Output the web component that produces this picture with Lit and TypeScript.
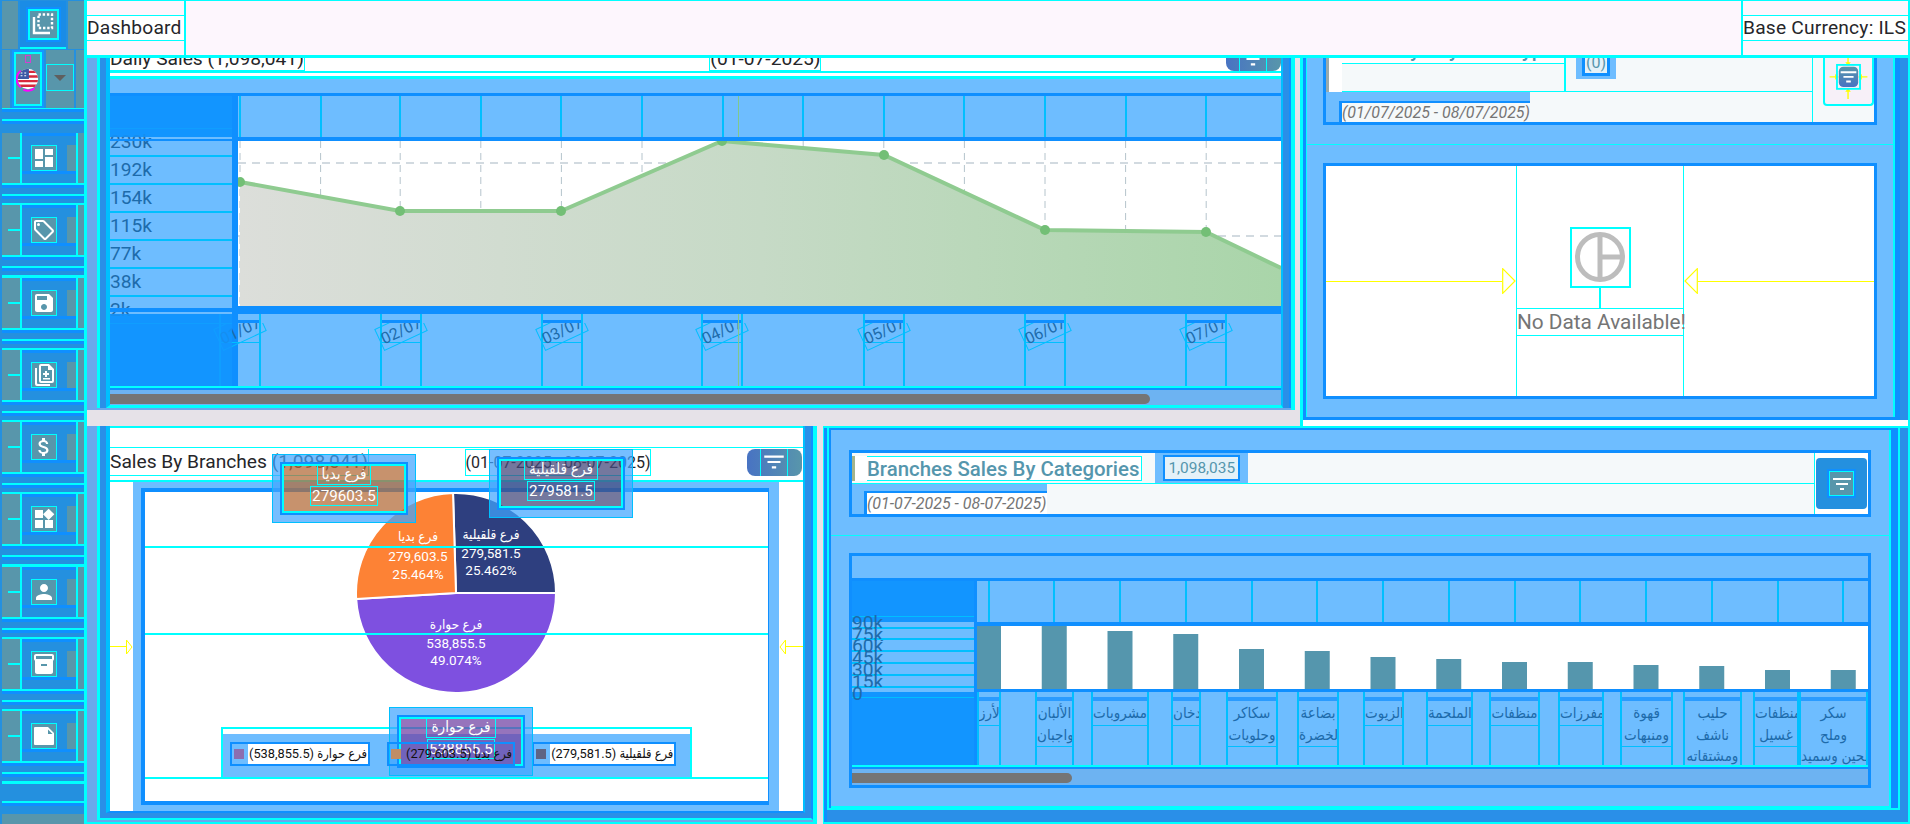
import { LitElement, css, html, svg } from "lit";
import { customElement } from "lit/decorators.js";

const FILTER = "M10 18h4v-2h-4v2zM3 6v2h18V6H3zm3 7h12v-2H6v2z";

const NAV_ICONS = [
  svg`<path d="M3 13h8V3H3v10zm0 8h8v-6H3v6zm10 0h8V11h-8v10zm0-18v6h8V3h-8z" />`,
  svg`<path d="M21.41 11.58l-9-9C12.05 2.22 11.55 2 11 2H4c-1.1 0-2 .9-2 2v7c0 .55.22 1.05.59 1.42l9 9c.36.36.86.58 1.41.58s1.05-.22 1.41-.59l7-7c.37-.36.59-.86.59-1.41s-.23-1.06-.59-1.42zM13 20.01L4 11V4h7v-.01l9 9-7 7.02z" /><circle cx="6.5" cy="6.5" r="1.5" />`,
  svg`<path d="M17 3H5c-1.11 0-2 .9-2 2v14c0 1.1.89 2 2 2h14c1.1 0 2-.9 2-2V7l-4-4zm-5 16c-1.66 0-3-1.34-3-3s1.34-3 3-3 3 1.34 3 3-1.34 3-3 3zm3-10H5V5h10v4z" />`,
  svg`<path fill-rule="evenodd" d="M9 1h8l5 5v12a2 2 0 0 1-2 2H9a2 2 0 0 1-2-2V3a2 2 0 0 1 2-2zm0 2v15h11V7h-4V3zM13 8h2v2h2v2h-2v2h-2v-2h-2v-2h2zM11 15h7v1.6h-7zM3 5h2v15a1 1 0 0 0 1 1h12v2H5a2 2 0 0 1-2-2z" />`,
  svg`<path d="M11.8 10.9c-2.27-.59-3-1.2-3-2.15 0-1.09 1.01-1.85 2.7-1.85 1.78 0 2.44.85 2.5 2.1h2.21c-.07-1.72-1.12-3.3-3.21-3.81V3h-3v2.16c-1.94.42-3.5 1.68-3.5 3.61 0 2.31 1.91 3.46 4.7 4.13 2.5.6 3 1.48 3 2.41 0 .69-.49 1.79-2.7 1.79-2.06 0-2.87-.92-2.98-2.1h-2.2c.12 2.19 1.76 3.42 3.68 3.83V21h3v-2.15c1.95-.37 3.5-1.5 3.5-3.55 0-2.84-2.43-3.81-4.7-4.4z" />`,
  svg`<path d="M13 13v8h8v-8h-8zM3 21h8v-8H3v8zM3 3v8h8V3H3zm13.66-1.31L11 7.34 16.66 13l5.66-5.66-5.66-5.65z" />`,
  svg`<path d="M12 12c2.21 0 4-1.79 4-4s-1.79-4-4-4-4 1.79-4 4 1.79 4 4 4zm0 2c-2.67 0-8 1.34-8 4v2h16v-2c0-2.66-5.33-4-8-4z" />`,
  svg`<path d="M20 2H4c-1 0-2 .9-2 2v3.01c0 .72.43 1.34 1 1.69V20c0 1.1 1.1 2 2 2h14c.9 0 2-.9 2-2V8.7c.57-.35 1-.97 1-1.69V4c0-1.1-1-2-2-2zm-5 12H9v-2h6v2zm5-7H4V4l16-.02V7z" />`,
  svg`<path fill-rule="evenodd" d="M3 3h13l6 6v11a1 1 0 0 1-1 1H3a1 1 0 0 1-1-1V4a1 1 0 0 1 1-1zm13 2.500V10h4.500z" />`,
];

// daily sales chart, numbers are page pixels (viewBox matches)
const DAILY_TICKS = [240, 320.6, 400.2, 480.8, 561.4, 642, 722.6, 803.2, 883.8, 964.4, 1045, 1125.6, 1206.2];
const DAILY_LABELS: [number, string][] = [
  [240, "01/07"], [400.5, "02/07"], [561.5, "03/07"], [722, "04/07"],
  [884, "05/07"], [1045, "06/07"], [1206, "07/07"],
];
const DAILY_POINTS = [
  [240, 182], [400, 211], [561, 211], [722, 141], [884, 155], [1045, 230], [1206, 232], [1281, 268],
];

const CAT_TICK = (i: number) => 988.5 + 65.75 * i;
const CAT_TOPS = [626, 626, 631, 634, 649, 651, 657, 659, 662, 662, 665, 666, 670, 670];
const CAT_LABELS: [number, number, string[]][] = [
  [977, 24, ["الأرز"]],
  [1035, 39, ["الألبان", "واجبان"]],
  [1091, 58, ["مشروبات"]],
  [1171, 30, ["دخان"]],
  [1226, 52, ["سكاكر", "وحلويات"]],
  [1297, 42, ["بضاعة", "الخضرة"]],
  [1363, 41, ["الزيوت"]],
  [1426, 47, ["الملحمة"]],
  [1489, 51, ["منظفات"]],
  [1558, 46, ["مفرزات"]],
  [1620, 53, ["قهوة", "ومنبهات"]],
  [1683, 59, ["حليب", "ناشف", "ومشتقاته"]],
  [1753, 46, ["منظفات", "غسيل"]],
  [1799, 69, ["سكر", "وملح", "طحين وسميد"]],
];

const PIE = [
  { pct: 25.462, color: "#2e3f7f" },
  { pct: 49.074, color: "#7e50e0" },
  { pct: 25.464, color: "#fd8235" },
];

function slices() {
  let start = -1.7;
  return PIE.map((s) => {
    const end = start + (s.pct * 360) / 100;
    const pt = (deg: number) => {
      const r = ((deg - 90) * Math.PI) / 180;
      return `${(105 + 100 * Math.cos(r)).toFixed(2)} ${(105 + 100 * Math.sin(r)).toFixed(2)}`;
    };
    const d = `M105 105L${pt(start)}A100 100 0 ${end - start > 180 ? 1 : 0} 1 ${pt(end)}Z`;
    start = end;
    return svg`<path d=${d} fill=${s.color} stroke="#fff" stroke-width="2" />`;
  });
}

@customElement("app-root")
export class AppRoot extends LitElement {
  static styles = css`
    :host {
      display: block;
      width: 1910px;
      height: 824px;
      overflow: hidden;
      font-family: Roboto, "DejaVu Sans Condensed", "DejaVu Sans", sans-serif;
      font-size: 19.2px;
      color: #26262a;
    }
    * {
      box-sizing: border-box;
    }
    svg {
      display: block;
    }
    .page {
      display: flex;
      width: 1910px;
      height: 824px;
    }

    /* sidebar */
    .sidebar {
      flex: none;
      display: flex;
      flex-direction: column;
      width: 87px;
      height: 824px;
      padding-left: 2px;
      border-right: 3px solid #00ffff;
      background: #2490df;
    }
    .sb-top {
      display: flex;
      gap: 2px;
      height: 48px;
      margin: 1px 0 1px;
    }
    .teal {
      background: #5896ab;
    }
    .sb-logo {
      display: flex;
      flex: none;
      align-items: center;
      justify-content: center;
      width: 46px;
      background: #1a8ce6;
      border: solid #00ffff;
      border-width: 0 0 2px;
    }
    .sb-logo-in {
      display: flex;
      align-items: center;
      justify-content: center;
      width: 35px;
      height: 35px;
      border: 2px solid #0f8fff;
      outline: 2px solid #00ffff;
      outline-offset: -4px;
      background: #5896ab;
    }
    .sb-flag {
      display: flex;
      gap: 2px;
      height: 58px;
    }
    .flag-cell {
      position: relative;
      flex: none;
      width: 32px;
      border: 4px solid #1397ff;
      background: #5896ab;
      outline: 2px solid #00ffff;
      outline-offset: -4px;
      display: flex;
      align-items: center;
      justify-content: center;
    }
    .flag-mark {
      position: absolute;
      top: 1px;
      left: 9px;
      width: 6px;
      height: 8px;
      border: 1px solid #d23fd2;
    }
    .caret-col {
      flex: none;
      display: flex;
      flex-direction: column;
      width: 28px;
    }
    .caret-box {
      display: flex;
      flex: none;
      align-items: center;
      justify-content: center;
      height: 27px;
      margin-top: 14px;
      border: 1px solid #00ffff;
      background: #5896ab;
    }
    .caret {
      width: 0;
      height: 0;
      border: solid transparent;
      border-width: 6px 6px 0;
      border-top-color: #5f5f5f;
    }
    .sb-band {
      flex: none;
      height: 25px;
      background: linear-gradient(#0f8fff 0 3px, #2490df 3px 10px, #00ffff 10px 12px, #0f8fff 12px 15px, #2490df 15px);
      border-top: 1px solid #00ffff;
    }
    .nav-item {
      display: flex;
      flex: none;
      height: 50px;
    }
    .nav-left {
      position: relative;
      flex: none;
      width: 18px;
    }
    .nav-left::after {
      content: "";
      position: absolute;
      top: 24px;
      right: 0;
      width: 12px;
      height: 2px;
      background: #00ffff;
    }
    .nav-mid {
      flex: none;
      width: 58px;
      border: solid #00ffff;
      border-width: 0 2px;
    }
    .nav-stripe {
      height: 12px;
      background: linear-gradient(#0f8fff 0 3px, #2490df 3px);
    }
    .nav-row {
      display: flex;
      height: 26px;
      padding-left: 9px;
      background: #2490df;
    }
    .nav-icon {
      display: flex;
      flex: none;
      align-items: center;
      justify-content: center;
      width: 26px;
      border: 1px solid #00ffff;
      background: #5896ab;
    }
    .nav-icon svg {
      width: 24px;
      height: 24px;
      fill: #fff;
    }
    .nav-fill {
      flex: 1;
      margin-left: 10px;
      background: #5896ab;
    }
    .nav-gap {
      flex: none;
      height: 22.3px;
      background: linear-gradient(#00ffff 0 2px, #0f8fff 2px 5px, #2490df 5px 11px, #00ffff 11px 13px, #0f8fff 13px 16px, #2490df 16px 20px, #00ffff 20px);
    }
    .nav-right {
      flex: 1;
    }
    .sb-foot {
      flex: 1;
      background: linear-gradient(#2490df 0 17px, #00ffff 17px 19px, #0f8fff 19px 22px, #2490df 22px 30px, #5896ab 30px);
    }

    /* main area */
    .main {
      position: relative;
      flex: 1;
      height: 824px;
      background: #e6e2e8;
    }
    .top-bar {
      position: absolute;
      top: 0;
      left: 0;
      right: 0;
      z-index: 6;
      display: flex;
      justify-content: space-between;
      height: 58px;
      border: solid #00ffff;
      border-width: 1px 2px 3px 0;
      background: #fdf6fd;
    }
    .top-cell {
      display: flex;
      align-items: center;
      height: 54px;
    }
    .top-cell.left {
      border-right: 2px solid #00ffff;
    }
    .top-cell.right {
      border-left: 2px solid #00ffff;
    }
    .top-cell span {
      padding-right: 2px;
      height: 26px;
      line-height: 24px;
      letter-spacing: 0.2px;
      border: solid #00ffff;
      border-width: 1px 0;
      background: #fff;
    }
    .row {
      display: flex;
    }
    .row.one {
      height: 426px;
      gap: 5px;
    }
    .row.two {
      height: 398px;
      gap: 6px;
    }

    /* nested strips around the left panels */
    .ring {
      flex: none;
      padding-left: 10px;
      border-right: 4px solid #00ffff;
      background: #6aa8ec;
    }
    .ring-a {
      height: 100%;
      padding: 0 6px;
      border: solid #00ffff;
      border-width: 0 0 0 3px;
      border-right: 2px solid #0f8fff;
      background: #2a8fe8;
    }
    .ring-b {
      display: flex;
      flex-direction: column;
      height: 100%;
      border: solid #00bfff;
      border-width: 0 2px 0 4px;
    }
    .tl {
      width: 1208px;
      height: 410px;
      padding-bottom: 2px;
    }
    .tl .ring-b {
      border-bottom: 3px solid #00ffff;
    }
    .bl {
      position: relative;
      width: 730px;
      height: 398px;
      padding-bottom: 2px;
      border-bottom: 2px solid #00ffff;
    }
    .bl .ring-a {
      padding-bottom: 5px;
      border-bottom: 2px solid #00ffff;
    }
    .bl .ring-b {
      border-bottom: 2px solid #0f8fff;
    }

    .title-row {
      display: flex;
      flex: none;
      align-items: center;
      justify-content: space-between;
      background: #fff;
    }
    .tl .title-row {
      height: 71px;
      padding-top: 47px;
    }
    .title-row .txt {
      height: 24px;
      line-height: 23px;
      border: solid #00ffff;
      border-width: 0 1px 1px 0;
      white-space: nowrap;
    }
    .tl .title-row .date {
      border-left-width: 1px;
    }
    .filter-tab {
      display: flex;
      flex: none;
      justify-content: center;
      width: 55px;
      height: 24px;
      border-radius: 0 0 8px 8px;
      background: linear-gradient(90deg, #4873c3, #5896ab);
    }
    .filter-tab span {
      display: flex;
      align-items: center;
      justify-content: center;
      width: 28px;
      border: solid #00ffff;
      border-width: 0 1px;
    }
    .filter-tab svg {
      width: 26px;
      height: 26px;
      fill: #fff;
    }
    .rule-set {
      flex: none;
      height: 8px;
      background: linear-gradient(#00ffff 0 2px, #fff 2px 5px, #00ffff 5px);
    }
    .lb {
      background: #6ebdff;
    }
    .deep {
      background: #0f8fff;
    }
    .axis-grid {
      display: grid;
      flex: none;
      grid-template-columns: 122px 1fr;
      background: #0f8fff;
    }
    .daily .axis-grid {
      grid-template-rows: 41px 177px 72px;
      height: 290px;
    }
    .cat .axis-grid {
      grid-template-rows: 41px 70px 73px;
      height: 184px;
    }
    .corner {
      position: relative;
      z-index: 2;
      background: rgba(20, 150, 255, 0.82);
    }
    .band {
      position: relative;
      border-left: 6px solid #0f8fff;
      background: #6ebdff;
    }
    .cat .band {
      border-left-width: 3px;
    }
    .tick {
      position: absolute;
      top: 0;
      bottom: 0;
      width: 2px;
      background: #00bfff;
    }
    .tick.cross {
      width: 1px;
      background: #7fc88c;
    }
    .ylabels {
      position: relative;
      display: flex;
      flex-direction: column;
      justify-content: center;
      color: #1d6bab;
      background: #6ebdff;
    }
    .ylabels::before,
    .ylabels::after {
      content: "";
      position: absolute;
      left: 0;
      right: 0;
      z-index: 1;
      background: #0f8fff;
    }
    .ylabels::before {
      top: 2px;
      height: 2px;
    }
    .ylabels::after {
      bottom: 2px;
      height: 4px;
    }
    .ylabels div {
      flex: none;
      height: 28px;
      line-height: 26px;
      border: solid #00bfff;
      border-width: 1px 0;
    }
    .cat .ylabels {
      z-index: 3;
    }
    .cat .ylabels::before,
    .cat .ylabels::after {
      display: none;
    }
    .cat .ylabels div {
      height: 11.8px;
      line-height: 11.8px;
    }
    .plot {
      display: block;
      border: solid #0f8fff;
      border-width: 4px 0 8px 6px;
      background: #fff;
    }
    .cat .plot {
      border-width: 4px 0 3px 3px;
    }
    .xcell {
      position: absolute;
      top: 0;
      bottom: 0;
      width: 42px;
      border: solid #00bfff;
      border-width: 0 2px;
    }
    .xcell .bar {
      height: 3px;
      margin-top: 6px;
      background: #0f8fff;
    }
    .xcell .clip {
      clip-path: inset(0 -12px 0 -12px);
      position: relative;
      height: 63px;
    }
    .xcell .rot {
      position: absolute;
      top: -5px;
      left: -5px;
      width: 48px;
      height: 24px;
      line-height: 23px;
      font-size: 16px;
      text-align: center;
      color: #1d6bab;
      border: 1px solid #00bfff;
      transform: rotate(-25deg);
    }
    .xcell .hr {
      position: absolute;
      top: 19px;
      left: 0;
      right: 0;
      height: 1px;
      background: #00bfff;
    }
    .rule-low {
      flex: none;
      height: 4px;
      background: linear-gradient(#00ffff 0 2px, #0f8fff 2px);
    }
    .scroll {
      flex: none;
      height: 15px;
      padding-top: 4px;
      background: #6db3f2;
    }
    .thumb {
      height: 10px;
      border-radius: 0 5px 5px 0;
      background: #757575;
    }

    /* top right panel */
    .tr {
      display: flex;
      flex: 1;
      flex-direction: column;
      border: solid #00ffff;
      border-width: 0 2px 0 3px;
      background: #2a8fe8;
    }
    .tr-a {
      height: 420px;
      margin-right: 8px;
      border: solid #0f8fff;
      border-width: 0 5px 3px 3px;
    }
    .tr-b {
      height: 417px;
      padding: 0 16px;
      background: #6ebdff;
      border: solid #00ffff;
      border-width: 0 2px 0 1px;
    }
    .tr-foot {
      flex: 1;
      background: #fff;
    }
    .head-box {
      display: grid;
      grid-template-columns: 1fr 62px;
      height: 125px;
      border: solid #0f8fff;
      border-width: 0 3px 3px;
      background: #f5f9fa;
    }
    .head-line {
      display: flex;
      height: 92px;
      border-bottom: 1px solid #00ffff;
    }
    .sub-title {
      flex: none;
      width: 240px;
      height: 92px;
      padding-left: 13px;
      border: solid #00ffff;
      border-width: 0 2px 0 0;
      border-left: 3px solid #9aa;
      background: linear-gradient(#fff, #fff) left / 13px 100% no-repeat;
    }
    .sub-title span {
      display: block;
      height: 64px;
      padding-top: 38px;
      font-size: 20.4px;
      font-weight: 500;
      line-height: 25px;
      color: #5596ad;
      background: #fff;
      border-bottom: 1px solid #00ffff;
      white-space: nowrap;
      overflow: hidden;
    }
    .badge {
      flex: none;
      align-self: flex-start;
      width: 40px;
      height: 79px;
      margin-left: 10px;
      padding: 0 6px 3px 6px;
      background: #6ebdff;
    }
    .badge div {
      height: 100%;
      padding-top: 52px;
      font-size: 16px;
      text-align: center;
      color: #5596ad;
      background: #e4f1f8;
      border: solid #0f8fff;
      border-width: 0 3px 3px;
      line-height: 22px;
    }
    .date-line {
      display: flex;
      height: 30px;
    }
    .date-blue {
      flex: none;
      width: 204px;
      padding: 9px 0 0 13px;
      background: #6ebdff;
    }
    .date-blue span {
      display: block;
      height: 21px;
      border: solid #0f8fff;
      border-width: 2px 0 0 3px;
      font-size: 16px;
      font-style: italic;
      line-height: 20px;
      color: #757575;
      background: #f5f9fa;
      white-space: nowrap;
    }
    .filter-cell {
      border-left: 1px solid #00ffff;
      padding: 0 0 0 10px;
    }
    .filter-card {
      display: block;
      width: 51px;
      height: 106px;
      border: solid #00ffff;
      border-width: 0 2px 2px;
      border-radius: 0 0 4px 4px;
      background: #f7f0f8;
    }
    .tr-sep {
      height: 1px;
      margin: 19px -16px 18px;
      background: #00ffff;
    }
    .chart-box {
      display: flex;
      align-items: stretch;
      height: 236px;
      border: 3px solid #0f8fff;
      background: #fff;
    }
    .side {
      display: flex;
      flex: 1;
      align-items: center;
    }
    .side i {
      flex: 1;
      height: 1px;
      background: #ffff00;
    }
    .side svg {
      flex: none;
    }
    .nodata {
      display: flex;
      flex: none;
      flex-direction: column;
      align-items: center;
      justify-content: center;
      width: 168px;
      border: solid #00ffff;
      border-width: 0 1px;
    }
    .nodata .ic {
      display: flex;
      align-items: center;
      justify-content: center;
      width: 61px;
      height: 61px;
      border: 2px solid #00ffff;
    }
    .nodata .link {
      width: 2px;
      height: 20px;
      background: #00ffff;
    }
    .nodata .msg {
      width: 100%;
      height: 28px;
      font-size: 20.8px;
      line-height: 26px;
      text-align: center;
      white-space: nowrap;
      color: #757575;
      border: solid #00ffff;
      border-width: 1px 0;
    }

    /* sales by branches */
    .bl .cap {
      flex: none;
      height: 21px;
      background: #fff;
      border-top: 2px solid #00ffff;
    }
    .bl .title-row {
      height: 29px;
      border-top: 1px solid #00ffff;
    }
    .bl .title-row .txt {
      height: 27px;
      line-height: 26px;
    }
    .bl .title-row .date {
      border: 1px solid #00ffff;
      font-size: 16px;
    }
    .bl .filter-tab {
      margin-right: 1px;
      height: 27px;
      border-radius: 8px;
    }
    .bl .after {
      flex: none;
      height: 6px;
      background: linear-gradient(#fff 0 4px, #00ffff 4px);
    }
    .pie-wrap {
      display: flex;
      flex: 1;
      background: #fff;
    }
    .pie-side {
      display: flex;
      flex: none;
      align-items: center;
      width: 23px;
      padding-top: 0;
    }
    .pie-side.r {
      width: 24px;
    }
    .pie-side i {
      flex: 1;
      height: 1px;
      background: #ffff00;
    }
    .pie-box {
      display: flex;
      flex: 1;
      padding: 6px 10px 6px 8px;
      background: #6ebdff;
    }
    .pie-in {
      position: relative;
      display: flex;
      flex: 1;
      flex-direction: column;
      border: 4px solid #0f8fff;
      border-right-width: 1px;
      background: #fff;
    }
    .pie-in svg.pie {
      position: absolute;
      top: -4px;
      left: 206px;
    }
    .pie-row {
      position: relative;
      flex: none;
      border-bottom: 2px solid #00ffff;
    }
    .pie-row.a {
      height: 56px;
    }
    .pie-row.b {
      height: 87px;
    }
    .pie-row.c {
      display: flex;
      align-items: flex-end;
      justify-content: center;
      height: 144px;
    }
    .legend {
      display: flex;
      width: 471px;
      height: 50px;
      padding-top: 7px;
      border: solid #00ffff;
      border-width: 2px 2px 0;
      background: linear-gradient(#fff, #fff) top / 100% 5px no-repeat, #6ebdff;
    }
    .leg-item {
      display: flex;
      flex: none;
      align-items: center;
      height: 24px;
      margin-top: 6px;
      margin-left: 7px;
      border: 2px solid #0f8fff;
      background: #6ebdff;
      font-size: 12.8px;
      color: #111;
    }
    .leg-item:nth-child(2),
    .leg-item:nth-child(3) {
      margin-left: 17px;
    }
    .leg-item i {
      flex: none;
      width: 10px;
      height: 10px;
      margin: 0 4px 0 2px;
    }
    .leg-item span {
      height: 20px;
      line-height: 19px;
      padding: 0 1px;
      background: #fff;
      white-space: nowrap;
    }
    /* this entry reads through the tooltip that covers it */
    .leg-item.under {
      position: relative;
      z-index: 5;
      background: none;
    }
    .leg-item.under span {
      background: none;
    }

    /* tooltips sit over the chart, coordinates are panel-relative */
    .tip {
      position: absolute;
      z-index: 4;
      width: 144px;
      height: 69px;
      border: 8px solid rgba(65, 165, 255, 0.72);
      outline: 1px solid #00bfff;
      outline-offset: -1px;
      font-size: 15.2px;
    }
    .tip-in {
      display: flex;
      flex-direction: column;
      align-items: center;
      height: 100%;
      border: 3px solid #0f8fff;
      outline: 2px solid #00ffff;
      outline-offset: -4px;
      color: #fff;
    }
    .tip-in b {
      height: 20px;
      font-weight: 400;
      line-height: 19px;
      padding: 0 4px;
      border: solid #00ffff;
      border-width: 0 1px 1px;
      white-space: nowrap;
    }
    .tip-in em {
      font-style: normal;
      height: 20px;
      margin-top: 1px;
      line-height: 18px;
      padding: 0 1px;
      border: solid #00ffff;
      border-width: 1px;
      white-space: nowrap;
    }
    .tip.t1 {
      top: 28px;
      left: 185px;
    }
    .tip.t1 .tip-in {
      background: rgba(180, 110, 60, 0.75);
    }
    .tip.t2 {
      top: 23px;
      left: 402px;
    }
    .tip.t2 .tip-in {
      background: rgba(70, 75, 125, 0.75);
    }
    .tip.t3 {
      top: 281px;
      left: 302px;
    }
    .tip.t3 .tip-in {
      background: rgba(115, 70, 165, 0.75);
    }

    /* branches sales by categories */
    .br {
      flex: 1;
      border: solid #00ffff;
      border-width: 2px 2px 2px 1px;
      background: #5aa5ee;
    }
    .br-a {
      height: 100%;
      padding: 0 8px 12px 0;
      background: #2a8fe8;
      border-left: 3px solid #0f8fff;
    }
    .br-b {
      height: 100%;
      padding: 2px 7px 0 2px;
      border: solid #00ffff;
      border-width: 0 2px 2px 2px;
      background: #0f8fff;
    }
    .br-c {
      height: 100%;
      padding: 20px 18px 0 18px;
      background: #6ebdff;
      border: solid #00ffff;
      border-width: 0 2px 2px 0;
    }
    .cat-head {
      display: grid;
      grid-template-columns: 1fr 54px;
      height: 67px;
      border: 3px solid #0f8fff;
      background: #f5f9fa;
    }
    .cat-title-row {
      display: flex;
      align-items: center;
      height: 31px;
      border-bottom: 1px solid #00ffff;
    }
    .cat-mark {
      flex: none;
      width: 15px;
      height: 25px;
      margin-right: 0;
      background: #fff;
      border-left: 3px solid #a4b48c;
    }
    .cat-title {
      flex: none;
      height: 25px;
      padding-right: 2px;
      font-size: 20.4px;
      font-weight: 500;
      line-height: 24px;
      color: #5596ad;
      background: #fff;
      border: 1px solid #00ffff;
      border-width: 1px 1px 1px 0;
      white-space: nowrap;
    }
    .cat-badge {
      flex: none;
      height: 30px;
      margin-left: 13px;
      padding: 2px 8px;
      background: #6ebdff;
    }
    .cat-badge div {
      height: 26px;
      padding: 0 3px;
      font-size: 15.4px;
      line-height: 22px;
      color: #5596ad;
      background: #e4f1f8;
      border: 2px solid #0f8fff;
    }
    .cat-date {
      display: flex;
      width: 195px;
      height: 30px;
      padding: 7px 0 0 12px;
      background: #6ebdff;
    }
    .cat-date span {
      display: block;
      width: 100%;
      height: 23px;
      border: solid #0f8fff;
      border-width: 2px 0 0 3px;
      font-size: 16px;
      font-style: italic;
      line-height: 21px;
      color: #757575;
      background: #fff;
      white-space: nowrap;
    }
    .cat-filter {
      padding: 5px 1px;
      background: #fff;
      border-left: 1px solid #00ffff;
    }
    .cat-filter div {
      display: flex;
      align-items: center;
      justify-content: center;
      height: 51px;
      border-radius: 4px;
      background: #2490df;
    }
    .cat-filter span {
      display: flex;
      align-items: center;
      justify-content: center;
      width: 29px;
      height: 29px;
      border: 2px solid #0f8fff;
      outline: 1px solid #00ffff;
      outline-offset: -3px;
      background: #5896ab;
    }
    .cat-filter svg {
      width: 24px;
      height: 24px;
      fill: #fff;
    }
    .cat-sep {
      height: 1px;
      margin: 18px -18px 17px;
      background: #00ffff;
    }
    .cat {
      display: flex;
      flex-direction: column;
      height: 235px;
      border: 3px solid #0f8fff;
    }
    .cat-top {
      flex: none;
      border-bottom: 3px solid #0f8fff;
      height: 25px;
    }
    .xtext {
      position: absolute;
      top: 0;
      bottom: 0;
      overflow: hidden;
      border: solid #00bfff;
      border-width: 0 2px;
      font-size: 15px;
      color: #1d6bab;
    }
    .xtext .bar {
      height: 4px;
      margin-top: 5px;
      background: #2a9bff;
    }
    .xtext .lines {
      margin-top: 2px;
      border-bottom: 1px solid #00bfff;
      text-align: center;
      white-space: nowrap;
    }
    .xtext .lines div {
      height: 21.5px;
      line-height: 21.5px;
    }
  `;

  private nav() {
    return NAV_ICONS.map(
      (icon) => html`
        <div class="nav-item">
          <div class="nav-left teal"></div>
          <div class="nav-mid">
            <div class="nav-stripe"></div>
            <div class="nav-row">
              <div class="nav-icon"><svg viewBox="0 0 24 24">${icon}</svg></div>
              <div class="nav-fill"></div>
            </div>
            <div class="nav-stripe"></div>
          </div>
          <div class="nav-right teal"></div>
        </div>
        <div class="nav-gap"></div>
      `
    );
  }

  private sidebar() {
    return html`
      <aside class="sidebar">
        <div class="sb-top">
          <div class="teal" style="width:16px"></div>
          <div class="sb-logo">
            <div class="sb-logo-in">
              <svg width="24" height="24" viewBox="0 0 24 24" fill="none" stroke="#fff">
                <path d="M3 5v16h16" stroke-width="2.4" />
                <rect x="7.500" y="2.500" width="13.500" height="13.500" stroke-width="2.400" stroke-dasharray="2.400 1.800" />
              </svg>
            </div>
          </div>
          <div class="teal" style="flex:1"></div>
        </div>
        <div class="sb-flag">
          <div class="teal" style="width:8px"></div>
          <div class="flag-cell">
            <span class="flag-mark"></span>
            <svg width="26" height="26" viewBox="0 0 26 26">
              <defs>
                <clipPath id="fc"><circle cx="13" cy="13" r="11" /></clipPath>
              </defs>
              <path d="M5 4A11.500 11.500 0 0 0 5 22" fill="none" stroke="#ff00ff" stroke-width="2" />
              <path d="M8 24.500A11 11 0 0 0 20 23" fill="none" stroke="#ff00ff" stroke-width="2" />
              <g clip-path="url(#fc)">
                <rect width="26" height="26" fill="#fff" />
                <path d="M0 4h26v2.600H0zM0 9h26v2.600H0zM0 14h26v2.600H0zM0 19h26v2.600H0z" fill="#d8283c" />
                <rect x="0" y="0" width="14" height="13" fill="#3c5aa6" />
                <path d="M5 6h2v1H5zM9 6h2v1H9zM5 9h2v1H5zM9 9h2v1H9z" fill="#fff" />
              </g>
            </svg>
          </div>
          <div class="caret-col teal">
            <div class="caret-box"><div class="caret"></div></div>
          </div>
          <div class="teal" style="flex:1"></div>
        </div>
        <div class="sb-band"></div>
        ${this.nav()}
        <div class="sb-foot"></div>
      </aside>
    `;
  }

  private filterTab() {
    return html`
      <div class="filter-tab">
        <span><svg viewBox="0 0 24 24"><path d=${FILTER} /></svg></span>
      </div>
    `;
  }

  private dailySales() {
    const line = DAILY_POINTS.map((p) => p.join(",")).join(" ");
    const area = `240,306 ${line} 1281,306`;
    return html`
      <section class="ring tl">
        <div class="ring-a">
          <div class="ring-b daily">
            <div class="title-row">
              <span class="txt">Daily Sales (1,098,041)</span>
              <span class="txt date">(01-07-2025)</span>
              ${this.filterTab()}
            </div>
            <div class="rule-set"></div>
            <div class="lb" style="height:14px"></div>
            <div class="deep" style="height:3px;flex:none"></div>
            <div class="axis-grid">
              <div class="corner"></div>
              <div class="band">
                ${DAILY_TICKS.map((t) => html`<span class="tick" style="left:${t - 239}px"></span>`)}
                <span class="tick cross" style="left:${738 - 238}px"></span>
              </div>
              <div class="ylabels">
                ${["230k", "192k", "154k", "115k", "77k", "38k", "2k"].map((l) => html`<div>${l}</div>`)}
              </div>
              <svg class="plot" width="1049" height="177" viewBox="238 141 1043 165">
                <defs>
                  <linearGradient id="ag" x1="0" x2="1" y1="0" y2="0">
                    <stop offset="0" stop-color="#dcdeda" />
                    <stop offset="0.5" stop-color="#c6dac6" />
                    <stop offset="1" stop-color="#a9d5a9" />
                  </linearGradient>
                </defs>
                ${DAILY_TICKS.map(
                  (t) => svg`<line x1=${t} x2=${t} y1="141" y2="306" stroke="#b5c4cc" stroke-dasharray="7 5" />`
                )}
                <line x1="238" x2="1281" y1="163" y2="163" stroke="#c4ced6" stroke-width="1.500" stroke-dasharray="8 6" />
                <line x1="238" x2="1281" y1="236" y2="236" stroke="#c4ced6" stroke-width="1.500" stroke-dasharray="8 6" />
                <polygon points=${area} fill="url(#ag)" />
                <polyline points=${line} fill="none" stroke="#8fcb90" stroke-width="4" />
                ${DAILY_POINTS.slice(0, 7).map(
                  (p) => svg`<circle cx=${p[0]} cy=${p[1]} r="5" fill="#73bf76" />`
                )}
              </svg>
              <div class="corner"></div>
              <div class="band">
                ${DAILY_LABELS.map(
                  ([t, label]) => html`
                    <div class="xcell" style="left:${t - 238 - 21}px">
                      <div class="bar"></div>
                      <div class="clip"><span class="hr"></span><div class="rot">${label}</div></div>
                    </div>
                  `
                )}
                <span class="tick cross" style="left:${738 - 238}px"></span>
              </div>
            </div>
            <div class="rule-low"></div>
            <div class="scroll"><div class="thumb" style="width:1040px"></div></div>
          </div>
        </div>
      </section>
    `;
  }

  private paymentType() {
    return html`
      <section class="tr">
        <div class="tr-a">
          <div class="tr-b">
            <div class="head-box">
              <div>
                <div class="head-line">
                  <div class="sub-title"><span>Sales By Payment Type</span></div>
                  <div class="badge"><div>(0)</div></div>
                </div>
                <div class="date-line">
                  <div class="date-blue"><span>(01/07/2025 - 08/07/2025)</span></div>
                </div>
              </div>
              <div class="filter-cell">
                <svg class="filter-card" viewBox="0 0 51 106">
                  <defs>
                    <linearGradient id="fg" x1="0" x2="0" y1="0" y2="1">
                      <stop offset="0" stop-color="#5896ab" />
                      <stop offset="1" stop-color="#4873c3" />
                    </linearGradient>
                  </defs>
                  <path d="M25 56v10M25 94v10M5 80h9M37 80h9" stroke="#ffff00" stroke-width="1.500" />
                  <path d="M22 64h6l-3 4zM22 96h6l-3-4zM11 77v6l4-3zM40 77v6l-4-3z" fill="#ffff00" />
                  <rect x="13" y="67" width="25" height="26" fill="none" stroke="#00ffff" stroke-width="2" />
                  <rect x="15" y="69" width="21" height="22" rx="5" fill="url(#fg)" />
                  <path d="M17 74h17v2H17zM20 79h11v2H20zM23 84h5v2h-5z" fill="#fff" />
                </svg>
              </div>
            </div>
            <div class="tr-sep"></div>
            <div class="chart-box">
              <div class="side">
                <i></i>
                <svg width="14" height="26" viewBox="0 0 14 26"><path d="M.7 .7 13 13 .7 25.300z" fill="none" stroke="#ffff00" stroke-width="1.200" /></svg>
              </div>
              <div class="nodata">
                <div class="ic">
                  <svg width="54" height="54" viewBox="0 0 54 54" fill="none" stroke="#bdbdbd" stroke-width="5">
                    <circle cx="27" cy="27" r="22.500" />
                    <path d="M27 5v44M27 27h22" />
                  </svg>
                </div>
                <div class="link"></div>
                <div class="msg">No Data Available!</div>
              </div>
              <div class="side">
                <svg width="14" height="26" viewBox="0 0 14 26"><path d="M13.300 .7 1 13l12.300 12.300z" fill="none" stroke="#ffff00" stroke-width="1.200" /></svg>
                <i></i>
              </div>
            </div>
          </div>
        </div>
        <div class="tr-foot"></div>
      </section>
    `;
  }

  private branches() {
    return html`
      <section class="ring bl">
        <div class="ring-a">
          <div class="ring-b">
            <div class="cap"></div>
            <div class="title-row">
              <span class="txt">Sales By Branches (1,098,041)</span>
              <span class="txt date">(01-07-2025 - 08-07-2025)</span>
              ${this.filterTab()}
            </div>
            <div class="after"></div>
            <div class="pie-wrap">
              <div class="pie-side"><i></i><svg width="7" height="16" viewBox="0 0 7 16"><path d="M.5 1 6 8 .5 15z" fill="none" stroke="#ffff00" /></svg></div>
              <div class="pie-box">
                <div class="pie-in">
                  <svg class="pie" width="210" height="210" viewBox="0 0 210 210">
                    ${slices()}
                    <g fill="#fff" font-size="13.500" text-anchor="middle" font-family="Roboto, 'DejaVu Sans Condensed', 'DejaVu Sans', sans-serif">
                      <text x="140" y="51">فرع قلقيلية</text>
                      <text x="140" y="70">279,581.5</text>
                      <text x="140" y="87">25.462%</text>
                      <text x="67" y="53">فرع بديا</text>
                      <text x="67" y="73">279,603.5</text>
                      <text x="67" y="91">25.464%</text>
                      <text x="105" y="141">فرع حوارة</text>
                      <text x="105" y="160">538,855.5</text>
                      <text x="105" y="177">49.074%</text>
                    </g>
                  </svg>
                  <div class="pie-row a"></div>
                  <div class="pie-row b"></div>
                  <div class="pie-row c">
                    <div class="legend">
                      <div class="leg-item"><i style="background:#8b6eb0"></i><span>(538,855.5) فرع حوارة</span></div>
                      <div class="leg-item under"><i style="background:#c08d65"></i><span>(279,603.5) فرع بديا</span></div>
                      <div class="leg-item"><i style="background:#5f6584"></i><span>(279,581.5) فرع قلقيلية</span></div>
                    </div>
                  </div>
                </div>
              </div>
              <div class="pie-side r"><svg width="7" height="16" viewBox="0 0 7 16"><path d="M6.500 1 1 8l5.500 7z" fill="none" stroke="#ffff00" /></svg><i></i></div>
            </div>
          </div>
        </div>
        <div class="tip t1"><div class="tip-in"><b>فرع بديا</b><em>279603.5</em></div></div>
        <div class="tip t2"><div class="tip-in"><b>فرع قلقيلية</b><em>279581.5</em></div></div>
        <div class="tip t3"><div class="tip-in"><b>فرع حوارة</b><em>538855.5</em></div></div>
      </section>
    `;
  }

  private categories() {
    return html`
      <section class="br">
        <div class="br-a">
          <div class="br-b">
            <div class="br-c">
              <div class="cat-head">
                <div>
                  <div class="cat-title-row">
                    <span class="cat-mark"></span>
                    <span class="cat-title">Branches Sales By Categories</span>
                    <div class="cat-badge"><div>1,098,035</div></div>
                  </div>
                  <div class="cat-date"><span>(01-07-2025 - 08-07-2025)</span></div>
                </div>
                <div class="cat-filter">
                  <div><span><svg viewBox="0 0 24 24"><path d=${FILTER} /></svg></span></div>
                </div>
              </div>
              <div class="cat-sep"></div>
              <div class="cat">
                <div class="lb cat-top"></div>
                <div class="axis-grid">
                  <div class="corner"></div>
                  <div class="band">
                    ${CAT_TOPS.map((_, i) => html`<span class="tick" style="left:${CAT_TICK(i) - 978}px"></span>`)}
                  </div>
                  <div class="ylabels lb">
                    ${["90k", "75k", "60k", "45k", "30k", "15k", "0"].map((l) => html`<div>${l}</div>`)}
                  </div>
                  <svg class="plot" width="894" height="70" viewBox="977 626 891 63">
                    ${CAT_TOPS.map(
                      (top, i) => svg`<rect x=${CAT_TICK(i) - 12.5} y=${top} width="25" height=${689 - top} fill="#5596ad" />`
                    )}
                  </svg>
                  <div class="corner"></div>
                  <div class="band">
                    ${CAT_LABELS.map(
                      ([x, w, lines]) => html`
                        <div class="xtext" style="left:${x - 977}px;width:${w}px">
                          <div class="bar"></div>
                          <div class="lines">${lines.map((l) => html`<div>${l}</div>`)}</div>
                        </div>
                      `
                    )}
                  </div>
                </div>
                <div class="rule-low"></div>
                <div class="scroll" style="height:16px"><div class="thumb" style="width:220px"></div></div>
              </div>
            </div>
          </div>
        </div>
      </section>
    `;
  }

  render() {
    return html`
      <div class="page">
        ${this.sidebar()}
        <main class="main">
          <header class="top-bar">
            <div class="top-cell left"><span>Dashboard</span></div>
            <div class="top-cell right"><span>Base Currency: ILS</span></div>
          </header>
          <div class="row one">${this.dailySales()} ${this.paymentType()}</div>
          <div class="row two">${this.branches()} ${this.categories()}</div>
        </main>
      </div>
    `;
  }
}

declare global {
  interface HTMLElementTagNameMap {
    "app-root": AppRoot;
  }
}
